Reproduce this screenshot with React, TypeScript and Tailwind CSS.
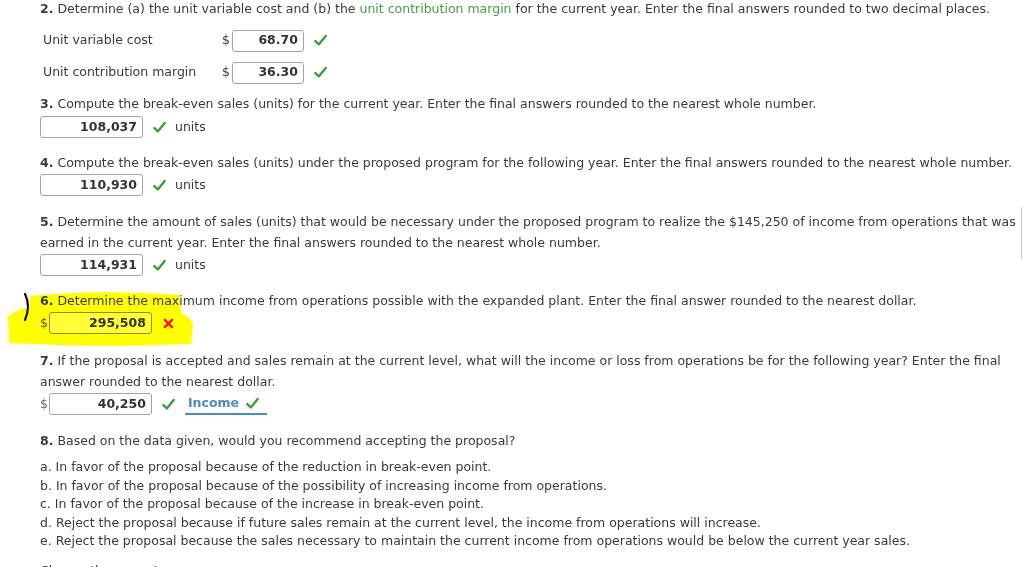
import React from "react"

const font = { fontFamily: '"DejaVu Sans", Verdana, sans-serif' }

function Check({ className = "" }: { className?: string }) {
  return (
    <svg viewBox="0 0 14 14" className={`h-[13px] w-[13px] ${className}`}>
      <path
        d="M1.5 7.6 L5.2 11.3 L12.6 2.2"
        fill="none"
        stroke="#3e9c3f"
        strokeWidth="2.6"
        strokeLinecap="round"
        strokeLinejoin="round"
      />
    </svg>
  )
}

function Cross() {
  return (
    <svg viewBox="0 0 12 12" className="h-[11px] w-[11px]">
      <path d="M2 2 L10 10 M10 2 L2 10" stroke="#f01818" strokeWidth="2.6" strokeLinecap="round" />
    </svg>
  )
}

function Box({ value, w = "w-[103px]", hl = false }: { value: string; w?: string; hl?: boolean }) {
  return (
    <div
      className={`flex h-[22px] items-center justify-end rounded-[3px] border pr-[5px] text-[12.5px] font-bold text-[#333] ${w} ${
        hl ? "border-[#8d8a2a] bg-[#ffff33]" : "border-[#a5a5a5] bg-white"
      }`}
    >
      {value}
    </div>
  )
}

function Q({ n, children, className = "" }: { n: number; children: React.ReactNode; className?: string }) {
  return (
    <p className={`leading-[21px] ${className}`}>
      <b>{n}.</b> {children}
    </p>
  )
}

const options = [
  "a. In favor of the proposal because of the reduction in break-even point.",
  "b. In favor of the proposal because of the possibility of increasing income from operations.",
  "c. In favor of the proposal because of the increase in break-even point.",
  "d. Reject the proposal because if future sales remain at the current level, the income from operations will increase.",
  "e. Reject the proposal because the sales necessary to maintain the current income from operations would be below the current year sales.",
]

export default function App() {
  return (
    <div className="relative h-[567px] w-[1024px] overflow-hidden bg-white text-[12.5px] text-[#3a3a3a]" style={font}>
      {/* highlighter mark */}
      <svg className="pointer-events-none absolute left-0 top-0 mix-blend-multiply" width="1024" height="567">
        <path
          d="M30 296 Q 100 289 180 295 L 181 313 Q 190 316 193 324 L 191 344 Q 100 348 9 343 L 8 316 Q 18 309 30 307 Z"
          fill="#ffff00"
        />
        <path d="M25 294 Q 31 306 25 320" fill="none" stroke="#111" strokeWidth="2.2" strokeLinecap="round" />
      </svg>
      <div className="absolute right-[2px] top-[207px] h-[52px] w-px bg-[#c8c8c8]" />

      <div className="relative pl-[40px] pr-[6px]">
        <p className="leading-[17px]">
          <b>2.</b> Determine (a) the unit variable cost and (b) the{" "}
          <span className="text-[#4b9a49]">unit contribution margin</span> for the current year. Enter the final
          answers rounded to two decimal places.
        </p>

        <div className="mt-[13px] flex h-[21px] items-center pl-[3px]">
          <span className="w-[179px]">Unit variable cost</span>
          <span className="mr-[2px]">$</span>
          <Box value="68.70" w="w-[72px]" />
          <Check className="ml-[10px]" />
        </div>
        <div className="mt-[11px] flex h-[21px] items-center pl-[3px]">
          <span className="w-[179px]">Unit contribution margin</span>
          <span className="mr-[2px]">$</span>
          <Box value="36.30" w="w-[72px]" />
          <Check className="ml-[10px]" />
        </div>

        <Q n={3} className="mt-[10px]">
          Compute the break-even sales (units) for the current year. Enter the final answers rounded to the nearest
          whole number.
        </Q>
        <div className="mt-[2px] flex items-center">
          <Box value="108,037" />
          <Check className="ml-[10px]" />
          <span className="ml-[9px]">units</span>
        </div>

        <Q n={4} className="mt-[14px]">
          Compute the break-even sales (units) under the proposed program for the following year. Enter the final
          answers rounded to the nearest whole number.
        </Q>
        <div className="mt-[1px] flex items-center">
          <Box value="110,930" />
          <Check className="ml-[10px]" />
          <span className="ml-[9px]">units</span>
        </div>

        <Q n={5} className="mt-[15px]">
          Determine the amount of sales (units) that would be necessary under the proposed program to realize the
          $145,250 of income from operations that was earned in the current year. Enter the final answers rounded to
          the nearest whole number.
        </Q>
        <div className="mt-[1px] flex items-center">
          <Box value="114,931" />
          <Check className="ml-[10px]" />
          <span className="ml-[9px]">units</span>
        </div>

        <Q n={6} className="mt-[14px]">
          Determine the maximum income from operations possible with the expanded plant. Enter the final answer
          rounded to the nearest dollar.
        </Q>
        <div className="mt-[1px] flex items-center">
          <span className="mr-[1px] text-[#555]">$</span>
          <Box value="295,508" hl />
          <span className="ml-[11px] flex">
            <Cross />
          </span>
        </div>

        <Q n={7} className="mt-[16px]">
          If the proposal is accepted and sales remain at the current level, what will the income or loss from
          operations be for the following year? Enter the final answer rounded to the nearest dollar.
        </Q>
        <div className="mt-[1px] flex items-center">
          <span className="mr-[1px] text-[#666]">$</span>
          <Box value="40,250" />
          <Check className="ml-[10px]" />
          <span className="ml-[10px] flex h-[22px] items-center gap-[7px] border-b-2 border-[#4a8cc6] pl-[3px] pr-[8px] font-bold text-[#4a8cc6]">
            Income
            <Check />
          </span>
        </div>

        <Q n={8} className="mt-[15px]">
          Based on the data given, would you recommend accepting the proposal?
        </Q>
        <ul className="mt-[7px] leading-[18.5px]">
          {options.map((o) => (
            <li key={o}>{o}</li>
          ))}
        </ul>
        <p className="mt-[11px] leading-[18.5px]">Choose the correct answer.</p>
      </div>
    </div>
  )
}
